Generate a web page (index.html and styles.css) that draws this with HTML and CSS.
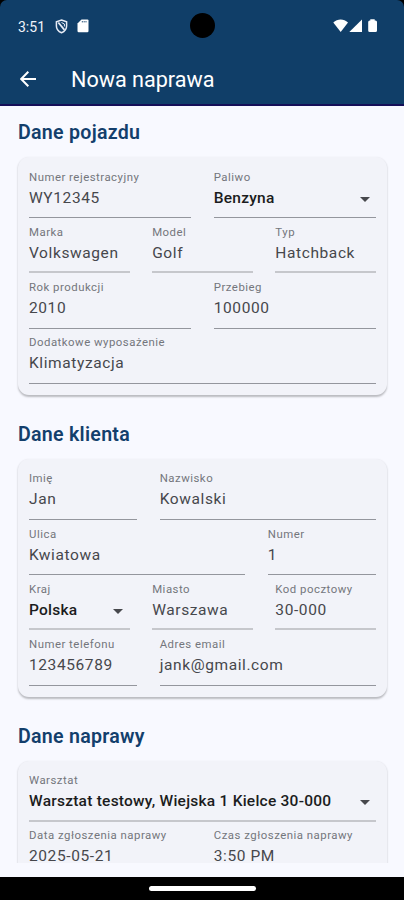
FILE: index.html
```html
<!DOCTYPE html>
<html lang="pl">
<head>
  <meta charset="UTF-8">
  <meta name="viewport" content="width=device-width, initial-scale=1.0">
  <title>Nowa naprawa</title>
  <link rel="stylesheet" href="styles.css">
</head>
<body>
  <div class="screen">
    <header class="header">
      <div class="status-bar">
        <span class="clock">3:51</span>
        <svg class="shield" width="13" height="15" viewBox="0 0 13 15" fill="none" stroke="#e6ebf5">
          <path d="M6.5 1 L11.6 2.8 V7 C11.6 10 9.4 12.6 6.5 13.8 C3.6 12.6 1.4 10 1.4 7 V2.8 Z" stroke-width="1.5"/>
          <path d="M3.3 3.5 L9.4 10.8" stroke-width="1.8"/>
          <path d="M6.5 3.5 L9.4 5 V7.5" stroke-width="1"/>
        </svg>
        <svg class="sd-card" width="12" height="14" viewBox="0 0 12 14">
          <path d="M4.5 0.5 H10.5 Q11.5 0.5 11.5 1.5 V12 Q11.5 13.2 10.3 13.2 H1.7 Q0.5 13.2 0.5 12 V4.5 Z" fill="#fff"/>
          <path d="M4.8 2.8 H9.8" stroke="#103e68" stroke-width="1" stroke-dasharray="1.2 .6"/>
        </svg>
        <svg class="signals" width="46" height="14" viewBox="0 0 46 14" fill="#fff">
          <path d="M0.3 3.5 C4.5 -0.4 10.8 -0.4 15 3.5 L7.7 13 Z"/>
          <path d="M29 0.5 V13 H16.3 Z"/>
          <path d="M37.3 0.3 H41.7 V1.6 H42.5 Q44 1.6 44 3.1 V11.5 Q44 13 42.5 13 H36.7 Q35.2 13 35.2 11.5 V3.1 Q35.2 1.6 36.7 1.6 H37.3 Z"/>
        </svg>
      </div>
      <div class="camera"></div>
      <div class="app-bar">
        <svg class="back" width="16" height="16" viewBox="0 0 16 16" fill="none" stroke="#fff" stroke-width="2">
          <path d="M16 8 H1.5 M8.3 0.8 L1.2 8 L8.3 15.2"/>
        </svg>
        <h1>Nowa naprawa</h1>
      </div>
    </header>

    <main class="content">
      <h2>Dane pojazdu</h2>
      <section class="card">
        <div class="row">
          <div class="field"><label>Numer rejestracyjny</label><span>WY12345</span></div>
          <div class="field select"><label>Paliwo</label><span>Benzyna</span></div>
        </div>
        <div class="row soft">
          <div class="field"><label>Marka</label><span>Volkswagen</span></div>
          <div class="field"><label>Model</label><span>Golf</span></div>
          <div class="field"><label>Typ</label><span>Hatchback</span></div>
        </div>
        <div class="row">
          <div class="field"><label>Rok produkcji</label><span>2010</span></div>
          <div class="field"><label>Przebieg</label><span>100000</span></div>
        </div>
        <div class="row">
          <div class="field"><label>Dodatkowe wyposażenie</label><span>Klimatyzacja</span></div>
        </div>
      </section>

      <h2>Dane klienta</h2>
      <section class="card">
        <div class="row">
          <div class="field"><label>Imię</label><span>Jan</span></div>
          <div class="field wide"><label>Nazwisko</label><span>Kowalski</span></div>
        </div>
        <div class="row">
          <div class="field wide"><label>Ulica</label><span>Kwiatowa</span></div>
          <div class="field"><label>Numer</label><span>1</span></div>
        </div>
        <div class="row soft">
          <div class="field select"><label>Kraj</label><span>Polska</span></div>
          <div class="field"><label>Miasto</label><span>Warszawa</span></div>
          <div class="field"><label>Kod pocztowy</label><span>30-000</span></div>
        </div>
        <div class="row">
          <div class="field"><label>Numer telefonu</label><span>123456789</span></div>
          <div class="field wide"><label>Adres email</label><span>jank@gmail.com</span></div>
        </div>
      </section>

      <h2>Dane naprawy</h2>
      <section class="card">
        <div class="row soft">
          <div class="field select"><label>Warsztat</label><span>Warsztat testowy, Wiejska 1 Kielce 30-000</span></div>
        </div>
        <div class="row">
          <div class="field"><label>Data zgłoszenia naprawy</label><span>2025-05-21</span></div>
          <div class="field"><label>Czas zgłoszenia naprawy</label><span>3:50 PM</span></div>
        </div>
      </section>
    </main>

    <footer class="nav-bar"><div class="handle"></div></footer>
  </div>
</body>
</html>
```
FILE: styles.css
```css
* {
  box-sizing: border-box;
}
body {
  margin: 0;
  background: #000;
  font-family: Roboto, sans-serif;
}
.screen {
  display: flex;
  flex-direction: column;
  width: 404px;
  height: 900px;
  overflow: hidden;
}
.header {
  position: relative;
  height: 106px;
  flex: none;
  background: #103e68;
  border-bottom: 2px solid #150f58;
  border-radius: 7px 7px 0 0;
  color: #fff;
}
.status-bar {
  display: flex;
  align-items: center;
  height: 52px;
  padding: 0 25px 0 18px;
}
.clock {
  width: 37px;
  font-size: 14px;
  font-weight: 400;
  color: #f0f3fa;
  padding-top: 2px;
}
.sd-card {
  margin-left: 9px;
}
.signals {
  margin-left: auto;
}
.camera {
  position: absolute;
  left: 190px;
  top: 13px;
  width: 25px;
  height: 25px;
  border-radius: 50%;
  background: #000;
}
.app-bar {
  display: flex;
  align-items: center;
  height: 54px;
  padding-left: 20px;
}
h1 {
  margin: 0 0 0 35px;
  font-size: 21.6px;
  font-weight: 400;
  letter-spacing: 0;
}
.content {
  height: 757px;
  flex: none;
  overflow: hidden;
  padding: 0 17px 0 18px;
  background: #f8f9ff;
}
h2 {
  display: flex;
  align-items: center;
  height: 51px;
  margin: 0;
  padding-top: 2px;
  font-size: 19.6px;
  font-weight: 600;
  letter-spacing: 0.27px;
  color: #133f6c;
}
.card {
  margin-bottom: 12.5px;
  padding: 6px 11px 11.5px;
  border-radius: 11px;
  background: #f2f3f9;
  box-shadow: 0 1.5px 2px rgba(0, 0, 0, 0.25);
}
.row {
  display: flex;
  gap: 22.5px;
  height: 55.2px;
}
.field {
  position: relative;
  flex: 1 1 0;
  min-width: 0;
  display: flex;
  flex-direction: column;
  padding-top: 6.7px;
  border-bottom: 1px solid #94969d;
  white-space: nowrap;
}
.wide {
  flex-grow: 2;
}
.soft .field {
  border-bottom: 2px solid #c6c7cc;
}
.field label {
  font-size: 11.4px;
  line-height: 14px;
  letter-spacing: 0.5px;
  color: #74767c;
}
.field span {
  font-size: 15.5px;
  line-height: 20px;
  margin-top: 4px;
  letter-spacing: 0.6px;
  color: #46474c;
}
.field.select span {
  font-weight: 500;
  letter-spacing: 0.24px;
  color: #1b1c20;
}
.select::after {
  content: "";
  position: absolute;
  right: 6.5px;
  top: 33.5px;
  border: 5px solid transparent;
  border-top-color: #47484d;
  border-bottom: 0;
}
.nav-bar {
  flex: 1;
  display: flex;
  justify-content: center;
  padding-top: 23px;
  background: linear-gradient(#f8f9ff 14px, #000 14px);
}
.handle {
  width: 107px;
  height: 5px;
  border-radius: 3px;
  background: #fff;
}
```
